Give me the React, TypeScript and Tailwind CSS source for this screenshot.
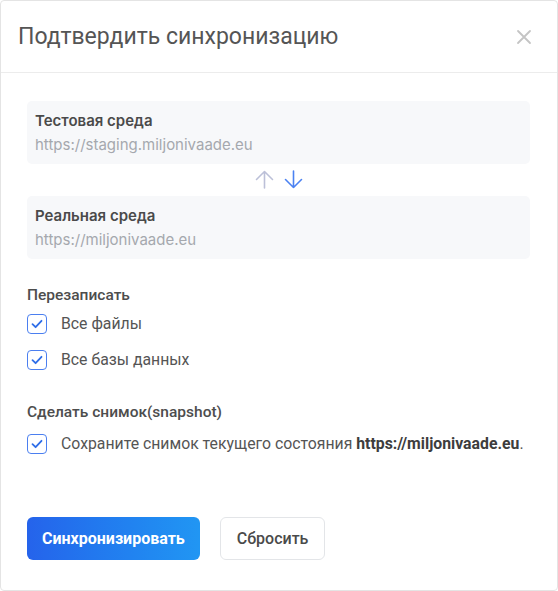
import * as React from "react"

const boxes = [
  { label: "Тестовая среда", url: "https://staging.miljonivaade.eu" },
  { label: "Реальная среда", url: "https://miljonivaade.eu" },
]

function Check() {
  return (
    <span className="flex h-[20px] w-[20px] shrink-0 items-center justify-center rounded-[4px] border-[1.5px] border-[#4b7ff0] bg-white">
      <svg width="12" height="10" viewBox="0 0 12 10" fill="none">
        <path d="M1.5 5.2 4.6 8.2 10.5 1.8" stroke="#2f6ee8" strokeWidth="1.8" strokeLinecap="round" strokeLinejoin="round" />
      </svg>
    </span>
  )
}

function EnvBox({ label, url }: { label: string; url: string }) {
  return (
    <div className="h-[63px] rounded-[5px] bg-[#f7f8fa] px-[8px] pt-[9px] font-['Inter',sans-serif]">
      <div className="text-[15px] font-semibold leading-[22px] text-[#4a4a4a]">{label}</div>
      <div className="mt-[2px] text-[15px] leading-[22px] text-[#a5a8ae]">{url}</div>
    </div>
  )
}

export default function App() {
  return (
    <div className="h-[591px] w-[558px] overflow-hidden rounded-[4px] border border-[#e4e4e4] bg-white font-['Roboto',sans-serif]">
      {/* Header */}
      <div className="flex h-[72px] items-center justify-between border-b border-[#ececec] pl-[17px] pr-[25px]">
        <h1 className="text-[23px] font-normal leading-[30px] text-[#555555]">Подтвердить синхронизацию</h1>
        <svg width="16" height="16" viewBox="0 0 16 16" fill="none">
          <path d="M2 2 14 14M14 2 2 14" stroke="#c4c4c4" strokeWidth="1.8" strokeLinecap="round" />
        </svg>
      </div>

      {/* Body */}
      <div className="pl-[26px] pr-[27px] pt-[28px]">
        <EnvBox {...boxes[0]} />
        <div className="flex h-[32px] items-center justify-center gap-[10px] pb-[2px]">
          <svg width="19" height="19" viewBox="0 0 19 19" fill="none">
            <path d="M9.5 18V1.5M1.5 9.5 9.5 1.5 17.5 9.5" stroke="#bcc0d8" strokeWidth="1.6" strokeLinecap="round" strokeLinejoin="round" />
          </svg>
          <svg width="19" height="19" viewBox="0 0 19 19" fill="none">
            <path d="M9.5 1V17.5M1.5 9.5 9.5 17.5 17.5 9.5" stroke="#4b82f2" strokeWidth="1.6" strokeLinecap="round" strokeLinejoin="round" />
          </svg>
        </div>
        <EnvBox {...boxes[1]} />

        <div className="mt-[25px] text-[15.5px] font-medium leading-[22px] text-[#4d4d4d]">Перезаписать</div>
        <label className="mt-[8px] flex items-center gap-[14px]">
          <Check />
          <span className="text-[15.8px] leading-[20px] text-[#555555]">Все файлы</span>
        </label>
        <label className="mt-[16px] flex items-center gap-[14px]">
          <Check />
          <span className="text-[15.8px] leading-[20px] text-[#555555]">Все базы данных</span>
        </label>

        <div className="mt-[31px] text-[15.5px] font-medium leading-[22px] text-[#4d4d4d]">Сделать снимок(snapshot)</div>
        <label className="mt-[11px] flex items-center gap-[14px]">
          <Check />
          <span className="whitespace-nowrap text-[15.8px] leading-[20px] text-[#555555]">
            Сохраните снимок текущего состояния <b className="font-bold text-[#3d3d3d]">https://miljonivaade.eu</b>.
          </span>
        </label>

        <div className="mt-[63px] flex gap-[20px]">
          <button className="h-[43px] rounded-[6px] bg-gradient-to-r from-[#2563eb] to-[#2196f3] px-[15px] text-[16px] font-bold text-white">
            Синхронизировать
          </button>
          <button className="h-[43px] rounded-[6px] border border-[#e3e5e8] bg-white px-[16px] text-[16px] font-medium text-[#4a4a4a]">
            Сбросить
          </button>
        </div>
      </div>
    </div>
  )
}
